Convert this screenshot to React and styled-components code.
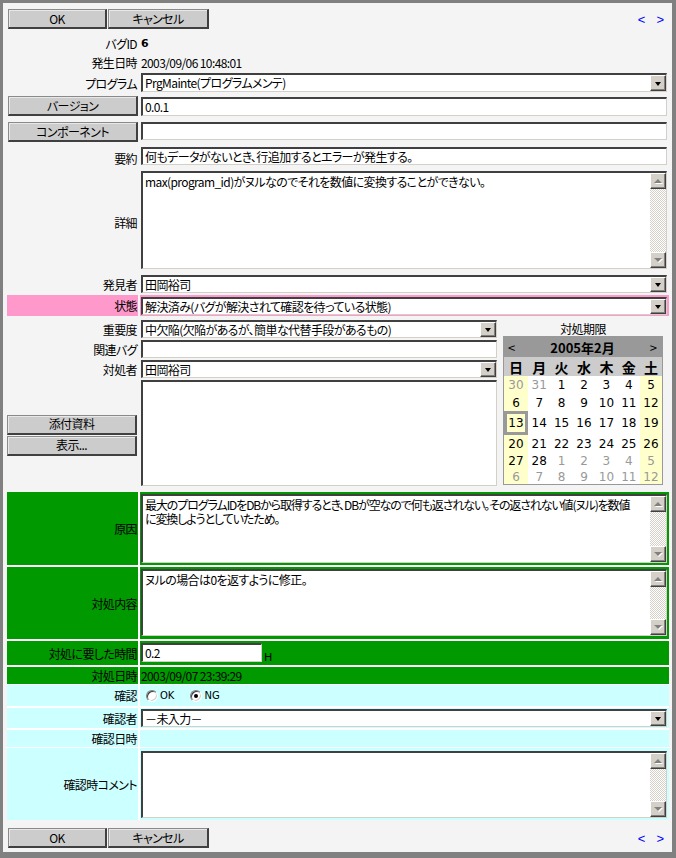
import React from 'react';
import styled, { createGlobalStyle } from 'styled-components';

const GlobalStyle = createGlobalStyle`
  html, body {
    margin: 0;
    padding: 0;
    background: #808080;
  }
  body {
    font-family: "Noto Sans CJK JP", "Noto Sans", sans-serif;
    font-size: 12px;
    font-feature-settings: "palt";
    letter-spacing: -0.6px;
    color: #000;
  }
  * {
    box-sizing: border-box;
  }
`;

const Frame = styled.div`
  margin: 3px 0 0 3px;
  width: 669px;
  height: 849px;
  background: #f4f4f4;
  padding: 6px 3px 0 4px;
  display: flex;
  flex-direction: column;
`;

const Toolbar = styled.div`
  display: flex;
  align-items: center;
  justify-content: space-between;
  height: 20px;
  margin-top: ${p => p.$mt || 0}px;
  padding: 0 5px 0 1px;
`;

const ButtonGroup = styled.div`
  display: flex;
  gap: 1px;
`;

const Btn = styled.div`
  width: ${p => p.$w}px;
  height: 20px;
  background: #cccccc;
  border-style: solid;
  border-width: 1px 2px 2px 1px;
  border-color: #8a8a8a #404040 #404040 #8a8a8a;
  box-shadow: inset 1px 1px #e8e8e8;
  display: flex;
  align-items: center;
  justify-content: center;
  line-height: 1;
  font-size: 12px;
`;

const Nav = styled.div`
  display: flex;
  gap: 11px;
  color: #0000ff;
  font-family: "Liberation Sans", sans-serif;
  font-size: 13px;
  letter-spacing: 0;
`;

const Form = styled.div`
  display: flex;
  flex-direction: column;
  gap: 2px;
  margin-top: 5px;
`;

const ColorBlock = styled.div`
  display: flex;
  flex-direction: column;
  gap: 2px;
  background: #ffffff;
`;

const Row = styled.div`
  display: grid;
  grid-template-columns: 131px minmax(0, 1fr);
  column-gap: 2px;
  height: ${p => p.$h}px;
`;

const LabelCell = styled.div`
  background: ${p => p.$bg || 'transparent'};
  display: flex;
  justify-content: flex-end;
  align-items: ${p => (p.$top ? 'flex-start' : 'center')};
  padding-right: ${p => (p.$top ? 0 : 1)}px;
  white-space: nowrap;
`;

const ValueCell = styled.div`
  background: ${p => p.$bg || 'transparent'};
  padding: ${p => p.$pt || 0}px 2px 0 1px;
  display: flex;
  align-items: ${p => (p.$center ? 'center' : 'flex-start')};
  white-space: nowrap;
  min-width: 0;
`;

const Strong = styled.span`
  font-weight: bold;
  font-family: "DejaVu Sans", sans-serif;
  font-size: 11px;
`;

const fieldBorder = `
  background: #ffffff;
  border-style: solid;
  border-width: 2px 1px 1px 2px;
  border-color: #404040 #d4d0c8 #d4d0c8 #404040;
`;

const TextBox = styled.div`
  ${fieldBorder}
  width: ${p => (p.$w ? `${p.$w}px` : '100%')};
  height: ${p => p.$h || 19}px;
  padding: 0 2px;
  display: flex;
  align-items: center;
  line-height: 1;
  overflow: hidden;
`;

const SelectBox = styled.div`
  ${fieldBorder}
  width: 100%;
  height: ${p => p.$h || 19}px;
  display: flex;
  align-items: stretch;
`;

const SelectText = styled.div`
  flex: 1;
  min-width: 0;
  padding: 0 2px;
  display: flex;
  align-items: center;
  overflow: hidden;
  line-height: 1;
`;

const DropBtn = styled.div`
  width: 16px;
  flex: none;
  background: #d4d0c8;
  border: 1px solid;
  border-color: #ffffff #404040 #404040 #ffffff;
  box-shadow: inset -1px -1px #808080;
  display: flex;
  align-items: center;
  justify-content: center;
  &::before {
    content: '';
    border-left: 3.5px solid transparent;
    border-right: 3.5px solid transparent;
    border-top: 4px solid #000;
    margin-top: 1px;
  }
`;

const Memo = styled.div`
  ${fieldBorder}
  width: 100%;
  height: ${p => p.$h}px;
  display: flex;
  overflow: hidden;
`;

const MemoText = styled.div`
  flex: 1;
  min-width: 0;
  padding: 2px 2px;
  line-height: 14px;
  white-space: nowrap;
  overflow: hidden;
  letter-spacing: ${p => (p.$tight ? '-1.1px' : 'inherit')};
`;

const ScrollBar = styled.div`
  width: 16px;
  flex: none;
  display: flex;
  flex-direction: column;
  justify-content: space-between;
  background-color: #ffffff;
  background-image: repeating-conic-gradient(#d4d0c8 0% 25%, #ffffff 0% 50%);
  background-size: 2px 2px;
`;

const ScrollBtn = styled.div`
  height: 16px;
  background: #d4d0c8;
  border: 1px solid;
  border-color: #ffffff #404040 #404040 #ffffff;
  box-shadow: inset -1px -1px #808080;
  display: flex;
  align-items: center;
  justify-content: center;
  &::before {
    content: '';
    border-left: 4px solid transparent;
    border-right: 4px solid transparent;
    ${p => (p.$up ? 'border-bottom' : 'border-top')}: 4px solid #808080;
    filter: drop-shadow(1px 1px 0 #ffffff);
  }
`;

const Unit = styled.span`
  align-self: flex-end;
  margin: 0 0 1px 2px;
  font-family: "DejaVu Sans", sans-serif;
  font-size: 11px;
`;

const Middle = styled.div`
  display: flex;
  height: 172px;
  padding-top: 2px;
`;

const MidLabels = styled.div`
  width: 131px;
  margin-right: 3px;
  display: flex;
  flex-direction: column;
  gap: 2px;
`;

const MidLabel = styled.div`
  height: 18px;
  display: flex;
  align-items: center;
  justify-content: flex-end;
  padding-right: 1px;
`;

const AttachArea = styled.div`
  height: 106px;
  display: flex;
  flex-direction: column;
  justify-content: center;
  gap: 1px;
  padding-top: 4px;
`;

const MidFields = styled.div`
  width: 356px;
  display: flex;
  flex-direction: column;
  gap: 2px;
`;

const CalColumn = styled.div`
  width: 160px;
  margin-left: 6px;
  display: flex;
  flex-direction: column;
`;

const CalTitle = styled.div`
  height: 16px;
  display: flex;
  align-items: center;
  justify-content: center;
`;

const CalTable = styled.div`
  border: 1px solid #999999;
  background: #ffffff;
  letter-spacing: 0;
`;

const CalHead = styled.div`
  height: 20px;
  background: #999999;
  display: flex;
  align-items: center;
  justify-content: space-between;
  padding: 0 5px 0 4px;
  font-size: 13px;
`;

const CalMonth = styled.span`
  font-weight: bold;
`;

const CalGrid = styled.div`
  display: grid;
  grid-template-columns: 24px repeat(5, 1fr) 22px;
`;

const DowCell = styled.div`
  height: 19px;
  background: #cccccc;
  font-weight: bold;
  font-size: 14px;
  display: flex;
  align-items: center;
  justify-content: center;
`;

const DayCell = styled.div`
  height: ${p => p.$h}px;
  background: ${p => (p.$weekend ? '#ffffcc' : '#ffffff')};
  color: ${p => (p.$other ? '#999999' : '#000000')};
  border: ${p => (p.$today ? '3px solid #999999' : 'none')};
  display: flex;
  align-items: center;
  justify-content: center;
  font-family: "DejaVu Sans", sans-serif;
  font-size: 12px;
`;

const RadioLabel = styled.span`
  display: inline-flex;
  align-items: center;
  gap: 2px;
  margin-left: ${p => p.$ml}px;
  font-family: "DejaVu Sans", sans-serif;
  font-size: 10px;
  letter-spacing: 0;
`;

const RadioDot = styled.span`
  position: relative;
  width: 12px;
  height: 12px;
  border-radius: 50%;
  background: #ffffff;
  border: 1px solid;
  border-color: #808080 #ffffff #ffffff #808080;
  box-shadow: inset 1px 1px #404040, inset -1px -1px #d4d0c8;
  &::after {
    content: '';
    display: ${p => (p.$checked ? 'block' : 'none')};
    position: absolute;
    left: 3px;
    top: 3px;
    width: 4px;
    height: 4px;
    border-radius: 50%;
    background: #000;
  }
`;

const Scroll = () => (
  <ScrollBar>
    <ScrollBtn $up />
    <ScrollBtn />
  </ScrollBar>
);

const Select = ({ children, h }) => (
  <SelectBox $h={h}>
    <SelectText>{children}</SelectText>
    <DropBtn />
  </SelectBox>
);

const ActionBar = ({ mt }) => (
  <Toolbar $mt={mt}>
    <ButtonGroup>
      <Btn $w={99}>OK</Btn>
      <Btn $w={101}>キャンセル</Btn>
    </ButtonGroup>
    <Nav>
      <span>&lt;</span>
      <span>&gt;</span>
    </Nav>
  </Toolbar>
);

const dows = ['日', '月', '火', '水', '木', '金', '土'];
const weeks = [
  [30, 31, 1, 2, 3, 4, 5],
  [6, 7, 8, 9, 10, 11, 12],
  [13, 14, 15, 16, 17, 18, 19],
  [20, 21, 22, 23, 24, 25, 26],
  [27, 28, 1, 2, 3, 4, 5],
  [6, 7, 8, 9, 10, 11, 12],
];
const rowHeights = [18, 17, 24, 18, 16, 15];

const isOther = (w, d) => (w === 0 && d > 20) || (w >= 4 && d < 20) || w === 5;

const Calendar = () => (
  <CalTable>
    <CalHead>
      <span>&lt;</span>
      <CalMonth>2005年2月</CalMonth>
      <span>&gt;</span>
    </CalHead>
    <CalGrid>
      {dows.map(d => (
        <DowCell key={d}>{d}</DowCell>
      ))}
      {weeks.map((week, w) =>
        week.map((d, i) => (
          <DayCell
            key={`${w}-${i}`}
            $h={rowHeights[w]}
            $weekend={i === 0 || i === 6}
            $other={isOther(w, d)}
            $today={w === 2 && i === 0}
          >
            {d}
          </DayCell>
        ))
      )}
    </CalGrid>
  </CalTable>
);

export default function App() {
  return (
    <>
      <GlobalStyle />
      <Frame>
        <ActionBar mt={0} />
        <Form>
          <Row $h={18}>
            <LabelCell>バグID</LabelCell>
            <ValueCell $center><Strong>6</Strong></ValueCell>
          </Row>
          <Row $h={17}>
            <LabelCell>発生日時</LabelCell>
            <ValueCell $center>2003/09/06 10:48:01</ValueCell>
          </Row>
          <Row $h={21}>
            <LabelCell>プログラム</LabelCell>
            <ValueCell><Select>PrgMainte(プログラムメンテ)</Select></ValueCell>
          </Row>
          <Row $h={24}>
            <LabelCell $top><Btn $w={130}>バージョン</Btn></LabelCell>
            <ValueCell $pt={1}><TextBox>0.0.1</TextBox></ValueCell>
          </Row>
          <Row $h={23}>
            <LabelCell $top><Btn $w={130}>コンポーネント</Btn></LabelCell>
            <ValueCell><TextBox $h={18} /></ValueCell>
          </Row>
          <Row $h={22}>
            <LabelCell>要約</LabelCell>
            <ValueCell><TextBox $h={18}>何もデータがないとき、行追加するとエラーが発生する。</TextBox></ValueCell>
          </Row>
          <Row $h={102}>
            <LabelCell>詳細</LabelCell>
            <ValueCell>
              <Memo $h={98}>
                <MemoText>max(program_id)がヌルなのでそれを数値に変換することができない。</MemoText>
                <Scroll />
              </Memo>
            </ValueCell>
          </Row>
          <Row $h={18}>
            <LabelCell>発見者</LabelCell>
            <ValueCell><Select h={18}>田岡裕司</Select></ValueCell>
          </Row>
          <Row $h={21}>
            <LabelCell $bg="#ff99cc">状態</LabelCell>
            <ValueCell $bg="#ff99cc" $pt={2}>
              <Select h={18}>解決済み(バグが解決されて確認を待っている状態)</Select>
            </ValueCell>
          </Row>
          <Middle>
            <MidLabels>
              <MidLabel>重要度</MidLabel>
              <MidLabel>関連バグ</MidLabel>
              <MidLabel>対処者</MidLabel>
              <AttachArea>
                <Btn $w={130}>添付資料</Btn>
                <Btn $w={130}>表示...</Btn>
              </AttachArea>
            </MidLabels>
            <MidFields>
              <Select h={18}>中欠陥(欠陥があるが、簡単な代替手段があるもの)</Select>
              <TextBox $h={18} />
              <Select h={18}>田岡裕司</Select>
              <Memo $h={106} />
            </MidFields>
            <CalColumn>
              <CalTitle>対処期限</CalTitle>
              <Calendar />
            </CalColumn>
          </Middle>
          <ColorBlock>
            <Row $h={73}>
              <LabelCell $bg="#009900">原因</LabelCell>
              <ValueCell $bg="#009900" $pt={2}>
                <Memo $h={69}>
                  <MemoText $tight>
                    最大のプログラムIDをDBから取得するとき、DBが空なので何も返されない。その返されない値(ヌル)を数値
                    <br />
                    に変換しようとしていたため。
                  </MemoText>
                  <Scroll />
                </Memo>
              </ValueCell>
            </Row>
            <Row $h={72}>
              <LabelCell $bg="#009900">対処内容</LabelCell>
              <ValueCell $bg="#009900" $pt={2}>
                <Memo $h={67}>
                  <MemoText>ヌルの場合は0を返すように修正。</MemoText>
                  <Scroll />
                </Memo>
              </ValueCell>
            </Row>
            <Row $h={24}>
              <LabelCell $bg="#009900">対処に要した時間</LabelCell>
              <ValueCell $bg="#009900" $pt={2}>
                <TextBox $w={121}>0.2</TextBox>
                <Unit>H</Unit>
              </ValueCell>
            </Row>
            <Row $h={16}>
              <LabelCell $bg="#009900">対処日時</LabelCell>
              <ValueCell $bg="#009900" $center>2003/09/07 23:39:29</ValueCell>
            </Row>
            <Row $h={21}>
              <LabelCell $bg="#ccffff">確認</LabelCell>
              <ValueCell $bg="#ccffff" $center>
                <RadioLabel $ml={5}><RadioDot />OK</RadioLabel>
                <RadioLabel $ml={16}><RadioDot $checked />NG</RadioLabel>
              </ValueCell>
            </Row>
            <Row $h={20}>
              <LabelCell $bg="#ccffff">確認者</LabelCell>
              <ValueCell $bg="#ccffff" $pt={1}><Select h={18}>－未入力－</Select></ValueCell>
            </Row>
            <Row $h={16}>
              <LabelCell $bg="#ccffff">確認日時</LabelCell>
              <ValueCell $bg="#ccffff" />
            </Row>
            <Row $h={72}>
              <LabelCell $bg="#ccffff">確認時コメント</LabelCell>
              <ValueCell $bg="#ccffff" $pt={3}>
                <Memo $h={67}>
                  <MemoText />
                  <Scroll />
                </Memo>
              </ValueCell>
            </Row>
          </ColorBlock>
        </Form>
        <ActionBar mt={8} />
      </Frame>
    </>
  );
}
